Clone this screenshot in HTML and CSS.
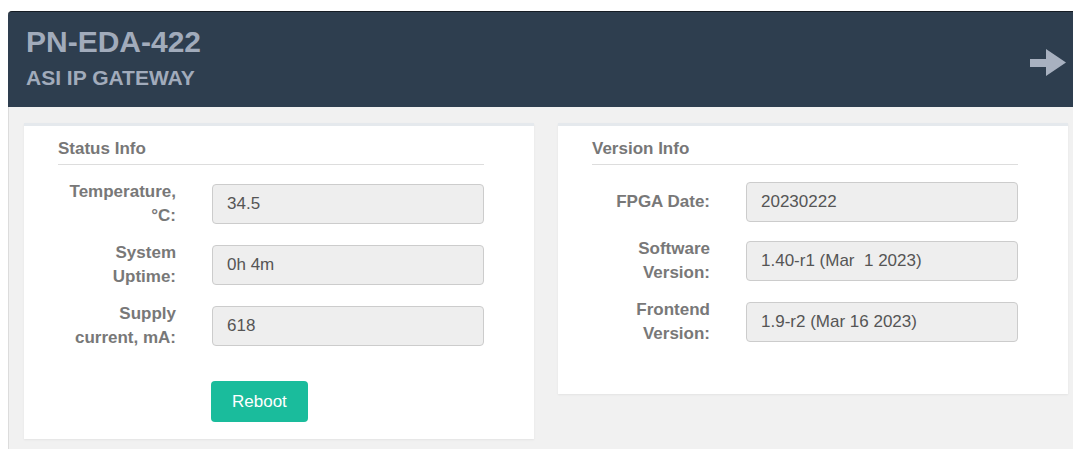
FILE: index.html
```html
<!DOCTYPE html>
<html lang="en">
<head>
<meta charset="utf-8">
<title>PN-EDA-422 — ASI IP Gateway</title>
<link rel="stylesheet" href="styles.css">
</head>
<body>
<div class="panel">
  <header class="panel-head">
    <div class="brand">
      <h1 class="brand-title">PN-EDA-422</h1>
      <h2 class="brand-sub">ASI IP GATEWAY</h2>
    </div>
    <a class="next-link" href="#" aria-label="Next">
      <svg width="36" height="27" viewBox="0 0 36 27" aria-hidden="true">
        <path d="M0 10 H16 V0 L36 13.5 L16 27 V18 H0 Z" fill="currentColor"/>
      </svg>
    </a>
  </header>

  <main class="panel-body">
    <section class="card">
      <h3 class="card-title">Status Info</h3>
      <div class="form">
        <div class="row">
          <label class="row-label">Temperature, °C:</label>
          <div class="field">34.5</div>
        </div>
        <div class="row">
          <label class="row-label">System Uptime:</label>
          <div class="field">0h 4m</div>
        </div>
        <div class="row">
          <label class="row-label">Supply current, mA:</label>
          <div class="field">618</div>
        </div>
      </div>
      <div class="actions">
        <button class="btn" type="button">Reboot</button>
      </div>
    </section>

    <section class="card">
      <h3 class="card-title">Version Info</h3>
      <div class="form">
        <div class="row">
          <label class="row-label">FPGA Date:</label>
          <div class="field">20230222</div>
        </div>
        <div class="row">
          <label class="row-label">Software Version:</label>
          <div class="field">1.40-r1 (Mar&nbsp; 1 2023)</div>
        </div>
        <div class="row">
          <label class="row-label">Frontend Version:</label>
          <div class="field">1.9-r2 (Mar 16 2023)</div>
        </div>
      </div>
    </section>
  </main>
</div>
</body>
</html>
```

FILE: styles.css
```css
html {
  overflow: hidden;
}

body {
  margin: 0;
  padding: 11px 0 0 8px;
  background: #ffffff;
  font-family: "Liberation Sans", Arial, sans-serif;
  font-size: 17px;
  color: #555555;
}

.panel {
  width: 1076px;
}

/* dark title bar */
.panel-head {
  display: flex;
  align-items: center;
  justify-content: space-between;
  background: #2e3e4f;
  border-top: 1px solid #151c24;
  border-radius: 4px 4px 0 0;
  padding: 13px 18px 17px 18px;
  color: #a1abbb;
}

.brand-title {
  margin: 0;
  font-size: 30px;
  line-height: 33px;
  font-weight: bold;
}

.brand-sub {
  margin: 8px 0 0 0;
  font-size: 21px;
  line-height: 24px;
  font-weight: bold;
}

.next-link {
  display: flex;
  color: #a8b1c0;
  margin-top: 9px;
}

/* grey work area */
.panel-body {
  display: flex;
  align-items: flex-start;
  gap: 24px;
  background: #f1f1f1;
  border-left: 1px solid #dcdcdc;
  padding: 16px 16px 10px 15px;
}

.card {
  flex: 1 1 0;
  background: #ffffff;
  border-top: 3px solid #e5e9ed;
  box-shadow: 0 1px 2px rgba(0, 0, 0, 0.06);
  padding: 11px 50px 17px 34px;
}

.card-title {
  margin: 0;
  padding-bottom: 3px;
  border-bottom: 1px solid #dddddd;
  font-size: 17px;
  line-height: 24px;
  font-weight: bold;
  color: #777777;
}

.form {
  display: flex;
  flex-direction: column;
  gap: 13px;
  margin-top: 15px;
  margin-bottom: 31px;
}

.row {
  display: grid;
  grid-template-columns: 118px 1fr;
  column-gap: 36px;
  align-items: center;
  min-height: 44px;
}

.row-label {
  text-align: right;
  font-weight: bold;
  line-height: 24px;
  color: #787878;
}

.field {
  height: 40px;
  box-sizing: border-box;
  display: flex;
  align-items: center;
  padding: 0 14px;
  background: #eeeeee;
  border: 1px solid #cccccc;
  border-radius: 4px;
  color: #555555;
  white-space: pre;
}

.actions {
  padding-left: 153px;
  margin-top: 5px;
}

.btn {
  height: 41px;
  padding: 0 21px;
  border: 0;
  border-radius: 4px;
  background: #1abc9c;
  color: #ffffff;
  font-family: inherit;
  font-size: 17px;
}
```
